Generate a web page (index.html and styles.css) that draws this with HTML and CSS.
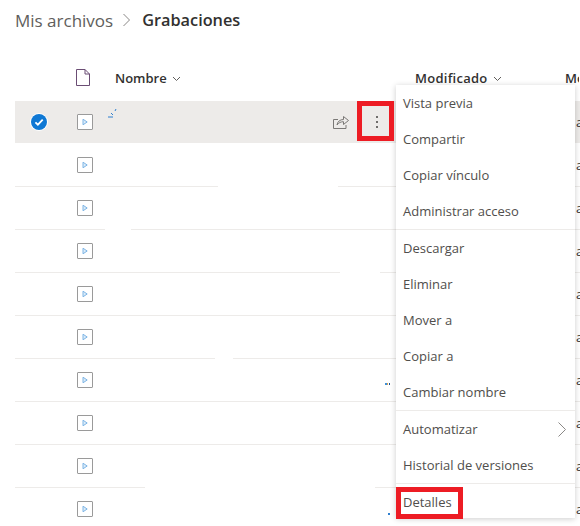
FILE: index.html
```html
<!DOCTYPE html>
<html lang="es">
<head>
  <meta charset="UTF-8">
  <title>Grabaciones</title>
  <link rel="stylesheet" href="styles.css">
</head>
<body>
  <svg class="defs" width="0" height="0">
    <symbol id="video" viewBox="0 0 16 16">
      <rect x="0.5" y="0.5" width="15" height="15" rx="0.5" fill="#fff" stroke="#9a9a9a"/>
      <path d="M6 5.2v5.6L10.2 8z" fill="#dcecf9" stroke="#7fb6e6"/>
    </symbol>
  </svg>

  <div class="breadcrumb">
    <span class="crumb">Mis archivos</span>
    <svg class="crumb-sep" width="10" height="14" viewBox="0 0 10 14"><path d="M1.5 1l6 6-6 6" fill="none" stroke="#8a8886"/></svg>
    <span class="crumb-current">Grabaciones</span>
  </div>

  <div class="list">
    <div class="list-head">
      <svg class="file-head" width="14" height="17" viewBox="0 0 14 17"><path d="M.5.500h8.500L13.500 5v11.500H.5zM9 .5V5h4.500" fill="none" stroke="#6b4d74"/></svg>
      <div class="col-name">Nombre <svg class="caret" width="9" height="6" viewBox="0 0 9 6"><path d="M1 1l3.500 3.500L8 1" fill="none" stroke="#605e5c"/></svg></div>
      <div class="col-date">Modificado <svg class="caret" width="9" height="6" viewBox="0 0 9 6"><path d="M1 1l3.500 3.500L8 1" fill="none" stroke="#605e5c"/></svg></div>
      <div class="col-more">Mo</div>
    </div>

    <div class="row selected">
      <svg class="check" width="18" height="18" viewBox="0 0 18 18"><circle cx="9" cy="9" r="9" fill="#fff"/><circle cx="9" cy="9" r="8" fill="#0f78d4"/><path d="M5.400 9.300l2.500 2.400 4.800-5" fill="none" stroke="#fff" stroke-width="1.800"/></svg>
      <svg class="file-icon"><use href="#video"/></svg>
      <div class="name">
        <svg class="smudge" width="10" height="9" viewBox="0 0 10 9"><path d="M0 8h5M3 4l2 2M8 0l-1 2" fill="none" stroke="#2f7fcf"/></svg>
      </div>
      <svg class="share" width="16" height="14" viewBox="0 0 16 14"><path d="M5 4.500H.5v9h12.500v-3.500M4 10c.5-3.500 3-5.500 6.500-5.500V1.500L15.500 5.500l-5 4V6.700c-2.500 0-5 1-6.500 3.300z" fill="none" stroke="#7a7876"/></svg>
      <div class="dots"><i></i><i></i><i></i></div>
      <div class="cut">a</div>
    </div>
    <div class="row"><svg class="file-icon"><use href="#video"/></svg><div class="name"><span class="gap gap-a"></span></div><div class="cut">a</div></div>
    <div class="row"><svg class="file-icon"><use href="#video"/></svg><div class="name"><span class="gap gap-b"></span></div><div class="cut">a</div></div>
    <div class="row"><svg class="file-icon"><use href="#video"/></svg><div class="name"><span class="gap gap-c"></span></div><div class="cut">a</div></div>
    <div class="row"><svg class="file-icon"><use href="#video"/></svg><div class="name"></div><div class="cut">a</div></div>
    <div class="row"><svg class="file-icon"><use href="#video"/></svg><div class="name"><span class="gap gap-d"></span></div><div class="cut">a</div></div>
    <div class="row"><svg class="file-icon"><use href="#video"/></svg><div class="name"><span class="tail tail-two"></span></div><div class="cut">a</div></div>
    <div class="row"><svg class="file-icon"><use href="#video"/></svg><div class="name"></div><div class="cut">a</div></div>
    <div class="row"><svg class="file-icon"><use href="#video"/></svg><div class="name"><span class="gap gap-e"></span></div><div class="cut">a</div></div>
    <div class="row"><svg class="file-icon"><use href="#video"/></svg><div class="name"><span class="tail tail-one"></span></div><div class="cut">a</div></div>
  </div>

  <div class="menu">
    <div class="item">Vista previa</div>
    <div class="item">Compartir</div>
    <div class="item">Copiar vínculo</div>
    <div class="item">Administrar acceso</div>
    <div class="menu-sep"></div>
    <div class="item">Descargar</div>
    <div class="item">Eliminar</div>
    <div class="item">Mover a</div>
    <div class="item">Copiar a</div>
    <div class="item">Cambiar nombre</div>
    <div class="menu-sep"></div>
    <div class="item has-sub">Automatizar <svg width="8" height="15" viewBox="0 0 8 15"><path d="M.5.500l7 7-7 7" fill="none" stroke="#8a8886"/></svg></div>
    <div class="item">Historial de versiones</div>
    <div class="menu-sep"></div>
    <div class="item">Detalles</div>
  </div>

  <div class="mark mark-dots"></div>
  <div class="mark mark-details"></div>
</body>
</html>
```

FILE: styles.css
```css
html, body {
  height: 526px;
  overflow: hidden;
}
body {
  margin: 0;
  position: relative;
  font-family: "Open Sans", "Noto Sans", sans-serif;
  color: #323130;
  background: #fff;
}
.defs {
  position: absolute;
}
.breadcrumb {
  display: flex;
  align-items: center;
  height: 40px;
  padding-left: 15px;
}
.crumb {
  font-size: 17px;
  color: #605e5c;
}
.crumb-sep {
  margin: 0 10px 0 9px;
}
.crumb-current {
  font-size: 16.300px;
  font-weight: 600;
  color: #323130;
}
.list {
  margin: 16px 0 0 15px;
}
.list-head {
  display: flex;
  align-items: center;
  height: 45px;
  padding-bottom: 2px;
  box-sizing: border-box;
  font-size: 13px;
  font-weight: 600;
  white-space: nowrap;
}
.file-head {
  margin-left: 61px;
}
.col-name {
  margin-left: 25px;
  width: 300px;
}
.col-date {
  width: 150px;
  letter-spacing: 0.25px;
}
.col-more {
  width: 14px;
  overflow: hidden;
}
.caret {
  margin: 0 0 1px 2px;
}
.row {
  display: flex;
  align-items: center;
  height: 42px;
  border-bottom: 1px solid #edebe9;
  font-size: 13px;
}
.row.selected {
  background: #edebe9;
  border-bottom-color: #fff;
}
.check {
  margin-left: 15px;
  margin-right: -33px;
  flex: none;
}
.file-icon {
  width: 16px;
  height: 16px;
  margin-left: 62px;
  flex: none;
}
.name {
  position: relative;
  flex: 1;
  height: 100%;
}
.smudge {
  position: absolute;
  left: 15px;
  top: 8px;
}
.tail {
  position: absolute;
  height: 2px;
  top: 24px;
  background: #2f7fcf;
}
.tail-two {
  right: 1px;
  width: 5px;
  background: linear-gradient(to right, #3d8fd8 0 2px, #d9a24a 2px 3px, #fff 3px 4px, #1f4f8f 4px);
}
.tail-one {
  right: 1px;
  width: 2px;
  top: 25px;
}
/* line is rubbed out here in the screenshot */
.gap {
  position: absolute;
  bottom: -1px;
  height: 1px;
  background: #fff;
}
.gap-a {
  left: 125px;
  width: 120px;
}
.gap-b {
  left: 12px;
  width: 26px;
}
.gap-c {
  left: 247px;
  width: 40px;
}
.gap-d {
  left: 122px;
  width: 18px;
}
.gap-e {
  left: 52px;
  width: 230px;
}
.share {
  margin-right: 27px;
  flex: none;
}
.dots {
  display: flex;
  flex-direction: column;
  gap: 3px;
  margin-right: 202px;
}
.dots i {
  width: 2px;
  height: 2px;
  background: #6f6d6b;
}
.row .name + .cut {
  margin-left: 185px;
}
.cut {
  width: 4px;
  overflow: hidden;
  flex: none;
  margin-left: auto;
}
.row.selected .cut {
  margin-left: -4px;
}
.menu {
  position: absolute;
  left: 396px;
  top: 85px;
  width: 179px;
  height: 433px;
  background: #fff;
  box-shadow: 0 1px 6px rgba(0, 0, 0, 0.2);
  font-size: 13px;
  color: #504e4c;
}
.item {
  display: flex;
  align-items: center;
  justify-content: space-between;
  height: 36px;
  padding: 0 9px 0 7px;
}
.menu-sep {
  height: 1px;
  background: #edebe9;
}
.mark {
  position: absolute;
  border: 5px solid #ed1c24;
}
.mark-dots {
  left: 357px;
  top: 101px;
  width: 27px;
  height: 30px;
}
.mark-details {
  left: 396px;
  top: 487px;
  width: 57px;
  height: 22px;
}
```
